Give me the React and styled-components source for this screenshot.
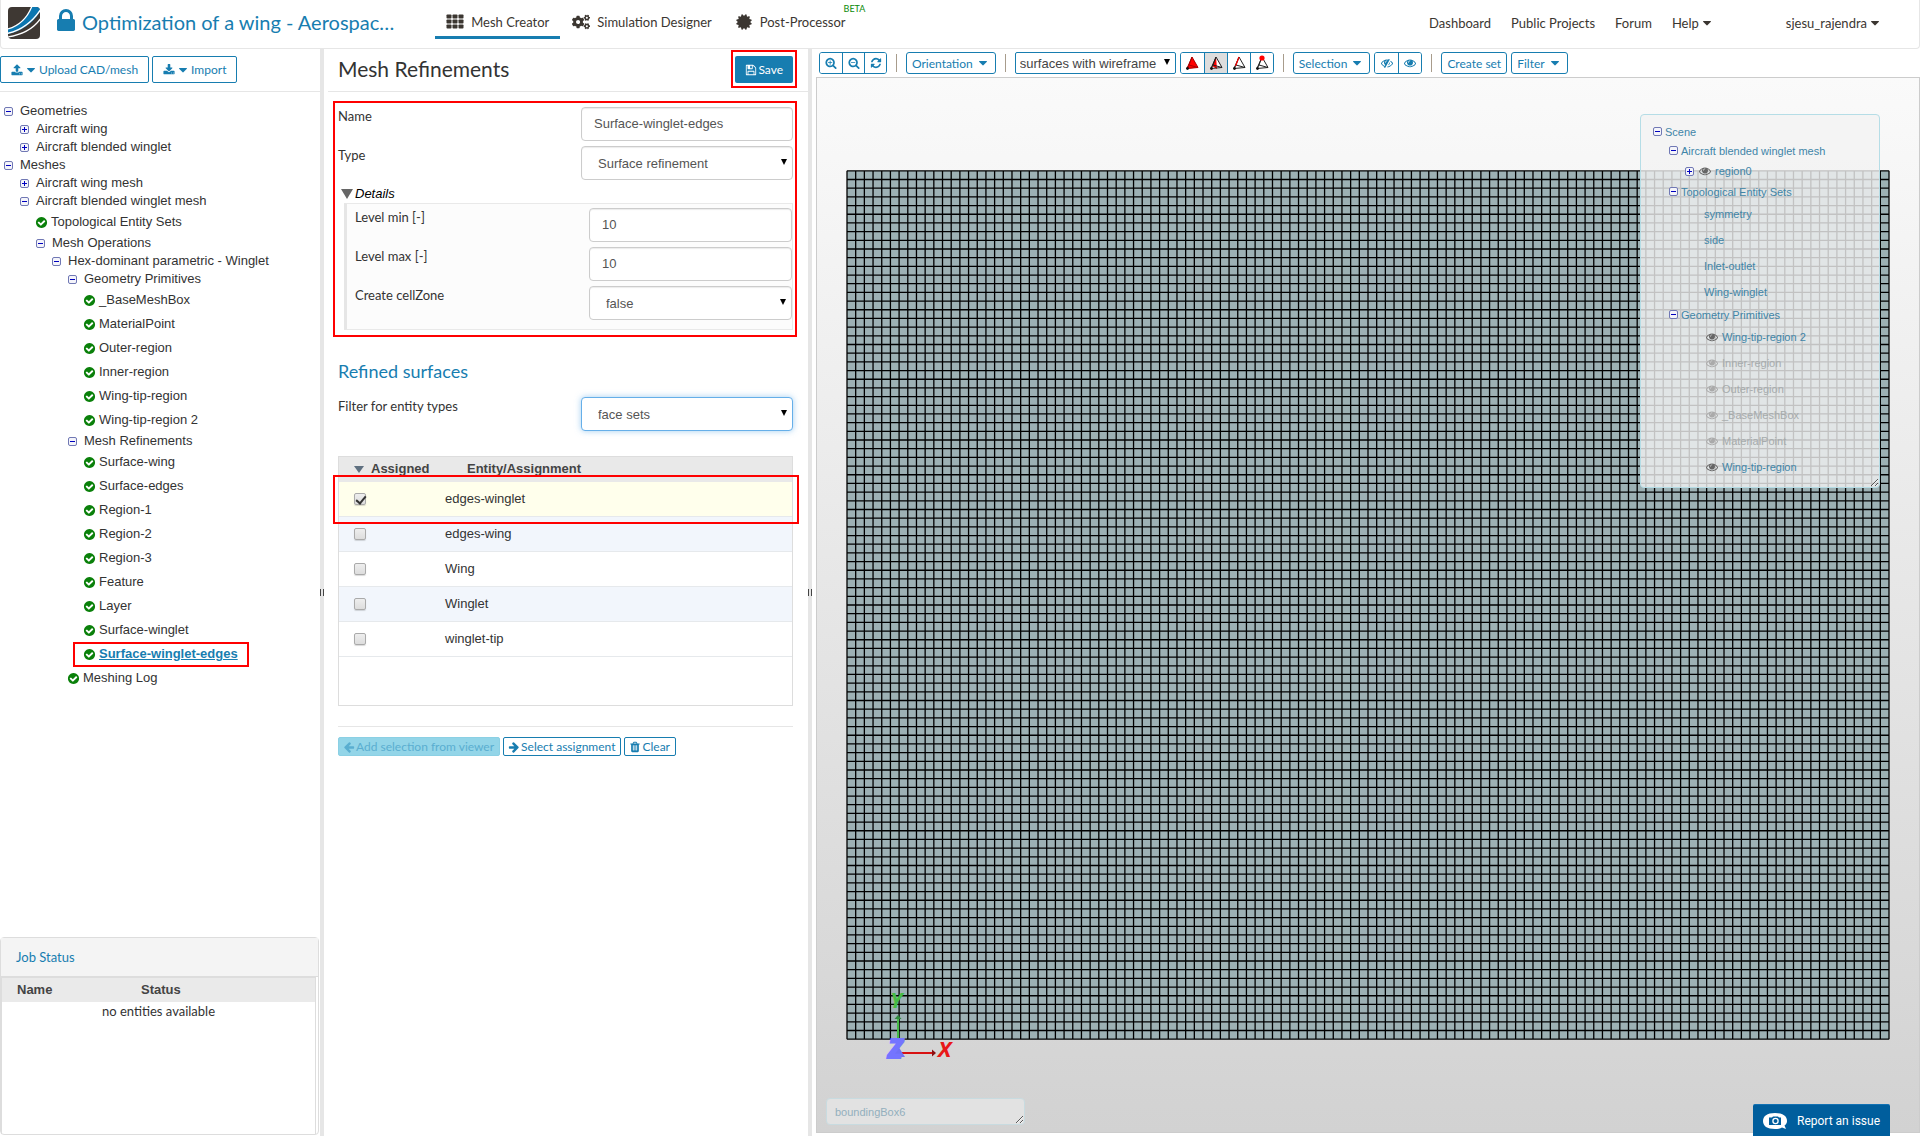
import { useState } from 'react'
import styled, { createGlobalStyle, css } from 'styled-components'
import { FaCogs } from 'react-icons/fa'

const blue = '#177db0'
const lato = 'Lato, sans-serif'
const arial = '"Liberation Sans", Arial, sans-serif'

const paths = {
    lock: 'M640 768h512v-192q0-106-75-181t-181-75-181 75-75 181v192zm832 96v576q0 40-28 68t-68 28h-960q-40 0-68-28t-28-68v-576q0-40 28-68t68-28h32v-192q0-184 132-316t316-132 316 132 132 316v192h32q40 0 68 28t28 68z',
    caret: 'M1408 704q0 26-19 45l-448 448q-19 19-45 19t-45-19l-448-448q-19-19-19-45t19-45 45-19h896q26 0 45 19t19 45z',
    check: 'M1412 734q0-28-18-46l-91-90q-19-19-45-19t-45 19l-408 407-226-226q-19-19-45-19t-45 19l-91 90q-18 18-18 46 0 27 18 45l362 362q19 19 45 19 27 0 46-19l543-543q18-18 18-45zm252 162q0 209-103 385.5t-279.5 279.5-385.5 103-385.5-103-279.5-279.5-103-385.5 103-385.5 279.5-279.5 385.5-103 385.5 103 279.5 279.5 103 385.5z',
    upload: 'M1344 1472q0-26-19-45t-45-19-45 19-19 45 19 45 45 19 45-19 19-45zm256 0q0-26-19-45t-45-19-45 19-19 45 19 45 45 19 45-19 19-45zm128-224v320q0 40-28 68t-68 28h-1472q-40 0-68-28t-28-68v-320q0-40 28-68t68-28h427q21 56 70.5 92t110.5 36h256q61 0 110.5-36t70.5-92h427q40 0 68 28t28 68zm-325-648q-17 40-59 40h-256v448q0 26-19 45t-45 19h-256q-26 0-45-19t-19-45v-448h-256q-42 0-59-40-17-39 14-69l448-448q18-19 45-19t45 19l448 448q31 30 14 69z',
    download: 'M1344 1344q0-26-19-45t-45-19-45 19-19 45 19 45 45 19 45-19 19-45zm256 0q0-26-19-45t-45-19-45 19-19 45 19 45 45 19 45-19 19-45zm128-224v320q0 40-28 68t-68 28h-1472q-40 0-68-28t-28-68v-320q0-40 28-68t68-28h465l135 136q58 56 136 56t136-56l136-136h464q40 0 68 28t28 68zm-325-569q17 41-14 70l-448 448q-18 19-45 19t-45-19l-448-448q-31-29-14-70 17-39 59-39h256v-448q0-26 19-45t45-19h256q26 0 45 19t19 45v448h256q42 0 59 39z',
    save: 'M512 1536h768v-384h-768v384zm896 0h128v-896q0-14-10-38.5t-20-34.5l-281-281q-10-10-34-20t-39-10v416q0 40-28 68t-68 28h-576q-40 0-68-28t-28-68v-416h-128v1280h128v-416q0-40 28-68t68-28h832q40 0 68 28t28 68v416zm-384-928v-320q0-13-9.5-22.5t-22.5-9.5h-192q-13 0-22.5 9.5t-9.5 22.5v320q0 13 9.5 22.5t22.5 9.5h192q13 0 22.5-9.5t9.5-22.5zm640 32v928q0 40-28 68t-68 28h-1344q-40 0-68-28t-28-68v-1344q0-40 28-68t68-28h928q40 0 88 20t76 48l280 280q28 28 48 76t20 88z',
    zoomIn: 'M1088 800v64q0 13-9.5 22.5t-22.5 9.5h-224v224q0 13-9.5 22.5t-22.5 9.5h-64q-13 0-22.5-9.5t-9.5-22.5v-224h-224q-13 0-22.5-9.5t-9.5-22.5v-64q0-13 9.5-22.5t22.5-9.5h224v-224q0-13 9.5-22.5t22.5-9.5h64q13 0 22.5 9.5t9.5 22.5v224h224q13 0 22.5 9.5t9.5 22.5zm128 32q0-185-131.5-316.5t-316.5-131.5-316.5 131.5-131.5 316.5 131.5 316.5 316.5 131.5 316.5-131.5 131.5-316.5zm512 832q0 53-37.5 90.5t-90.5 37.5q-54 0-90-38l-343-342q-179 124-399 124-143 0-273.5-55.5t-225-150-150-225-55.5-273.5 55.5-273.5 150-225 225-150 273.5-55.5 273.5 55.5 225 150 150 225 55.5 273.5q0 220-124 399l343 343q37 37 37 90z',
    zoomOut: 'M1088 800v64q0 13-9.5 22.5t-22.5 9.5h-576q-13 0-22.5-9.5t-9.5-22.5v-64q0-13 9.5-22.5t22.5-9.5h576q13 0 22.5 9.5t9.5 22.5zm128 32q0-185-131.5-316.5t-316.5-131.5-316.5 131.5-131.5 316.5 131.5 316.5 316.5 131.5 316.5-131.5 131.5-316.5zm512 832q0 53-37.5 90.5t-90.5 37.5q-54 0-90-38l-343-342q-179 124-399 124-143 0-273.5-55.5t-225-150-150-225-55.5-273.5 55.5-273.5 150-225 225-150 273.5-55.5 273.5 55.5 225 150 150 225 55.5 273.5q0 220-124 399l343 343q37 37 37 90z',
    refresh: 'M1639 1056q0 5-1 7-64 268-268 434.5t-478 166.5q-146 0-282.5-55t-243.5-157l-129 129q-19 19-45 19t-45-19-19-45v-448q0-26 19-45t45-19h448q26 0 45 19t19 45-19 45l-137 137q71 66 161 102t187 36q134 0 250-65t186-179q11-17 53-117 8-23 30-23h192q13 0 22.5 9.5t9.5 22.5zm25-800v448q0 26-19 45t-45 19h-448q-26 0-45-19t-19-45 19-45l138-138q-148-137-349-137-134 0-250 65t-186 179q-11 17-53 117-8 23-30 23h-199q-13 0-22.5-9.5t-9.5-22.5v-7q65-268 270-434.5t480-166.5q146 0 284 55.5t245 156.5l130-129q19-19 45-19t45 19 19 45z',
    eye: 'M1664 960q-152-236-381-353 61 104 61 225 0 185-131.5 316.5t-316.5 131.5-316.5-131.5-131.5-316.5q0-121 61-225-229 117-381 353 133 205 333.5 326.5t434.5 121.5 434.5-121.5 333.5-326.5zm-720-384q0-20-14-34t-34-14q-125 0-214.5 89.5t-89.5 214.5q0 20 14 34t34 14 34-14 14-34q0-86 61-147t147-61q20 0 34-14t14-34zm848 384q0 34-20 69-140 230-376.5 368.5t-499.5 138.5-499.5-139-376.5-368q-20-35-20-69t20-69q140-229 376.5-368t499.5-139 499.5 139 376.5 368q20 35 20 69z',
    eyeSlash: 'M555 1335l78-141q-87-63-136-159t-49-203q0-121 61-225-229 117-381 353 167 258 427 375zm389-759q0-20-14-34t-34-14q-125 0-214.5 89.5t-89.5 214.5q0 20 14 34t34 14 34-14 14-34q0-86 61-147t147-61q20 0 34-14t14-34zm363-191q0 7-1 9-106 189-316 567t-315 566l-49 89q-10 16-28 16-12 0-134-70-16-10-16-28 0-12 44-87-143-65-263.5-173t-208.5-245q-20-31-20-69t20-69q153-235 380-371t496-136q89 0 180 17l54-97q10-16 28-16 5 0 18 6t31 15.5 33 18.5 31.5 18.5 19.5 11.5q16 10 16 27zm37 447q0 139-79 253.5t-209 164.5l280-502q8 45 8 84zm448 128q0 35-20 69-39 64-109 145-150 172-347.5 267t-419.5 95l74-132q212-18 392.5-137t301.5-307q-115-179-282-294l63-112q95 64 182.5 153t144.5 184q20 34 20 69z',
    trash: 'M704 1376v-704q0-14-9-23t-23-9h-64q-14 0-23 9t-9 23v704q0 14 9 23t23 9h64q14 0 23-9t9-23zm256 0v-704q0-14-9-23t-23-9h-64q-14 0-23 9t-9 23v704q0 14 9 23t23 9h64q14 0 23-9t9-23zm256 0v-704q0-14-9-23t-23-9h-64q-14 0-23 9t-9 23v704q0 14 9 23t23 9h64q14 0 23-9t9-23zm-544-992h448l-48-117q-7-9-17-11h-317q-10 2-17 11zm928 32v64q0 14-9 23t-23 9h-96v948q0 83-47 143.5t-113 60.5h-832q-66 0-113-58.5t-47-141.5v-952h-96q-14 0-23-9t-9-23v-64q0-14 9-23t23-9h309l70-167q15-37 54-63t79-26h320q40 0 79 26t54 63l70 167h309q14 0 23 9t9 23z',
    arrow: 'M1664 896v128q0 53-32.5 90.5t-84.5 37.5h-704l293 294q38 36 38 90t-38 90l-75 76q-37 37-90 37-52 0-91-37l-651-652q-37-37-37-90 0-52 37-91l651-650q38-38 91-38 52 0 90 38l75 74q38 38 38 91t-38 91l-293 293h704q52 0 84.5 37.5t32.5 90.5z',
    certificate: 'M1504 896l138 135q30 28 20 70-12 41-52 51l-188 48 53 186q12 41-19 70-29 31-70 19l-186-53-48 188q-10 40-51 52-12 2-19 2-31 0-51-22l-135-138-135 138q-28 30-70 20-41-11-51-52l-48-188-186 53q-41 12-70-19-31-29-19-70l53-186-188-48q-40-10-52-51-10-42 20-70l138-135-138-135q-30-28-20-70 12-41 52-51l188-48-53-186q-12-41 19-70 29-31 70-19l186 53 48-188q10-41 51-51 41-12 70 19l135 139 135-139q29-30 70-19 41 10 51 51l48 188 186-53q41-12 70 19 31 29 19 70l-53 186 188 48q40 10 52 51 10 42-20 70z',
}

function Icon({ name, size = 14, flip }) {
    return (
        <svg width={size} height={size} viewBox="0 0 1792 1792" fill="currentColor" aria-hidden="true">
            <path d={paths[name]} transform={flip ? 'translate(1792 0) scale(-1 1)' : undefined} />
        </svg>
    )
}

function GridIcon() {
    return (
        <svg width="18" height="15" viewBox="0 0 18 15" fill="currentColor" aria-hidden="true">
            {[0, 5, 10].map((y) => [0, 6, 12].map((x) => <rect key={`${x}-${y}`} x={x + 0.5} y={y + 0.5} width="5" height="4" rx="0.8" />))}
        </svg>
    )
}

function Logo() {
    return (
        <svg width="32" height="32" viewBox="0 0 32 32" aria-hidden="true">
            <defs>
                <clipPath id="logo-clip"><rect width="32" height="32" rx="4" /></clipPath>
            </defs>
            <g clipPath="url(#logo-clip)">
                <rect width="32" height="32" fill="#3e3833" />
                <path d="M0 22Q17 17 24 -1H33V3Q22 22 0 27Z" fill="#0a76b0" />
                <path d="M0 22Q17 17 24 -1" fill="none" stroke="#fff" strokeWidth="1.3" />
                <path d="M-1 26.500Q20 22 33 2" fill="none" stroke="#fff" strokeWidth="1.500" />
                <path d="M-1 30Q22 27 33 11" fill="none" stroke="#fff" strokeWidth="1.300" />
            </g>
        </svg>
    )
}

function Toggle({ open }) {
    return (
        <svg width="9" height="9" viewBox="0 0 9 9" aria-hidden="true">
            <rect x="0.5" y="0.5" width="8" height="8" rx="1.5" fill="#f4f4fa" stroke="#7078b4" />
            <path d={open ? 'M2 4.5H7' : 'M2 4.5H7M4.500 2V7'} stroke="#0000c0" fill="none" />
        </svg>
    )
}

// mode: which part of the mesh element gets picked
function PickIcon({ mode }) {
    return (
        <svg width="14" height="16" viewBox="0 0 14 16" aria-hidden="true">
            <path d="M7 2L3 11L1 14L13 12.500Z" fill={mode === 'volume' ? '#f00' : '#fff'} />
            {mode === 'face' && <path d="M7 2L3 11L8 14Z" fill="#f00" />}
            <path d="M7 2L2 13.500L13 12.500ZM7 2L4 10L13 12.500M4 10L2 13.500" fill="none" stroke={mode === 'volume' ? '#a00' : '#222'} strokeWidth="1" />
            {mode === 'edge' && <path d="M7 2L3.500 11" stroke="#f00" strokeWidth="1.200" />}
            {mode === 'node' && <circle cx="7" cy="3" r="2.600" fill="#f00" />}
            <circle cx="2.500" cy="13.500" r="1.400" fill="#111" />
        </svg>
    )
}

function CameraBubble() {
    return (
        <svg width="24" height="18" viewBox="0 0 24 18" aria-hidden="true">
            <path d="M12 1C4 1 0 4 0 9s4 8 12 8c3 0 5-.5 7-1.500L23 17l-1.500-3.500C23.500 12 24 10.500 24 9c0-5-4-8-12-8Z" fill="#fff" />
            <path d="M6 5.500h3l1-1h5l1 1h2V13H6Z" fill="#005e9d" />
            <circle cx="12.500" cy="9" r="2.600" fill="none" stroke="#fff" strokeWidth="1.300" />
        </svg>
    )
}

const COLS = 120
const ROWS = 100
const CELL = 8.7

function MeshGrid() {
    const w = COLS * CELL
    const h = ROWS * CELL
    let d = ''
    for (let i = 0; i <= COLS; i++) d += `M${i * CELL} 0V${h}`
    for (let i = 0; i <= ROWS; i++) d += `M0 ${i * CELL}H${w}`
    return (
        <MeshSvg viewBox={`-1 -1 ${w + 2} ${h + 2}`} aria-label="Mesh">
            <rect width={w} height={h} fill="#9db1b4" />
            <path d={d} stroke="#000" strokeWidth="1.300" fill="none" />
        </MeshSvg>
    )
}

function Axes() {
    return (
        <AxesSvg width="90" height="96" viewBox="0 0 90 96" aria-label="Axes">
            <path d="M17 66V36" stroke="#45bb45" strokeWidth="2" />
            <path d="M13.500 37L17 33L20.500 37Z" fill="#2f8a3c" />
            <path d="M20 71H52" stroke="#d81212" strokeWidth="2" />
            <path d="M51 67.500L55 71L51 74.500Z" fill="#8a1010" />
            <path d="M8 75L17 64L24 75Z" fill="#7070f5" />
            <text x="9" y="26" fill="#45bb45" fontSize="22">Y</text>
            <text x="7" y="76" fill="#7474ff" stroke="#7474ff" strokeWidth="2" fontSize="27">Z</text>
            <text x="57" y="75" fill="#e81818" fontSize="22">X</text>
        </AxesSvg>
    )
}

const tree = [
    { label: 'Geometries', indent: 4, open: true },
    { label: 'Aircraft wing', indent: 20 },
    { label: 'Aircraft blended winglet', indent: 20 },
    { label: 'Meshes', indent: 4, open: true },
    { label: 'Aircraft wing mesh', indent: 20 },
    { label: 'Aircraft blended winglet mesh', indent: 20, open: true },
    { label: 'Topological Entity Sets', indent: 36, leaf: true },
    { label: 'Mesh Operations', indent: 36, open: true },
    { label: 'Hex-dominant parametric - Winglet', indent: 52, open: true },
    { label: 'Geometry Primitives', indent: 68, open: true },
    { label: '_BaseMeshBox', indent: 84, leaf: true },
    { label: 'MaterialPoint', indent: 84, leaf: true },
    { label: 'Outer-region', indent: 84, leaf: true },
    { label: 'Inner-region', indent: 84, leaf: true },
    { label: 'Wing-tip-region', indent: 84, leaf: true },
    { label: 'Wing-tip-region 2', indent: 84, leaf: true },
    { label: 'Mesh Refinements', indent: 68, open: true },
    { label: 'Surface-wing', indent: 84, leaf: true },
    { label: 'Surface-edges', indent: 84, leaf: true },
    { label: 'Region-1', indent: 84, leaf: true },
    { label: 'Region-2', indent: 84, leaf: true },
    { label: 'Region-3', indent: 84, leaf: true },
    { label: 'Feature', indent: 84, leaf: true },
    { label: 'Layer', indent: 84, leaf: true },
    { label: 'Surface-winglet', indent: 84, leaf: true },
    { label: 'Surface-winglet-edges', indent: 84, leaf: true, selected: true },
    { label: 'Meshing Log', indent: 68, leaf: true },
]

const scene = [
    { label: 'Scene', indent: 12, toggle: 'open' },
    { label: 'Aircraft blended winglet mesh', indent: 28, toggle: 'open' },
    { label: 'region0', indent: 44, toggle: 'closed', eye: true, height: 22 },
    { label: 'Topological Entity Sets', indent: 28, toggle: 'open' },
    { label: 'symmetry', indent: 63, height: 26 },
    { label: 'side', indent: 63, height: 26 },
    { label: 'Inlet-outlet', indent: 63, height: 26 },
    { label: 'Wing-winglet', indent: 63, height: 26 },
    { label: 'Geometry Primitives', indent: 28, toggle: 'open' },
    { label: 'Wing-tip-region 2', indent: 65, eye: true, height: 26 },
    { label: 'Inner-region', indent: 65, eye: true, height: 26, hidden: true },
    { label: 'Outer-region', indent: 65, eye: true, height: 26, hidden: true },
    { label: '_BaseMeshBox', indent: 65, eye: true, height: 26, hidden: true },
    { label: 'MaterialPoint', indent: 65, eye: true, height: 26, hidden: true },
    { label: 'Wing-tip-region', indent: 65, eye: true, height: 26 },
]

const entities = ['edges-winglet', 'edges-wing', 'Wing', 'Winglet', 'winglet-tip']

function SelectField({ id, value, focused, children }) {
    return (
        <SelectWrap>
            <Select id={id} defaultValue={value} $focused={focused}>{children || <option>{value}</option>}</Select>
            <SelectArrow />
        </SelectWrap>
    )
}

function Header() {
    return (
        <TopBar>
            <Logo />
            <Project href="#project">
                <Icon name="lock" size={28} />
                <span>Optimization of a wing - Aerospac…</span>
            </Project>
            <Modes>
                <Mode href="#mesh" $active><GridIcon />Mesh Creator</Mode>
                <Mode href="#simulation"><FaCogs size={18} />Simulation Designer</Mode>
                <Mode href="#post"><Icon name="certificate" size={18} />Post-Processor<Beta>BETA</Beta></Mode>
            </Modes>
            <UserNav>
                <a href="#dashboard">Dashboard</a>
                <a href="#projects">Public Projects</a>
                <a href="#forum">Forum</a>
                <a href="#help">Help<Icon name="caret" /></a>
                <UserLink href="#user">sjesu_rajendra<Icon name="caret" /></UserLink>
            </UserNav>
        </TopBar>
    )
}

function Sidebar() {
    return (
        <Side>
            <SideActions>
                <OutlineButton type="button"><Icon name="upload" size={12} /><Icon name="caret" />Upload CAD/mesh</OutlineButton>
                <OutlineButton type="button"><Icon name="download" size={12} /><Icon name="caret" />Import</OutlineButton>
            </SideActions>
            <Tree>
                {tree.map((node, i) => (
                    <TreeRow key={i} $indent={node.indent} $leaf={node.leaf}>
                        <TreeLink href="#node" $leaf={node.leaf} $selected={node.selected}>
                            {node.leaf ? <Icon name="check" size={13} /> : <Toggle open={node.open} />}
                            <span>{node.label}</span>
                        </TreeLink>
                    </TreeRow>
                ))}
            </Tree>
            <Jobs>
                <JobsTitle>Job Status</JobsTitle>
                <JobsTable>
                    <thead>
                        <tr><th>Name</th><th>Status</th></tr>
                    </thead>
                    <tbody>
                        <tr><td colSpan={2}>no entities available</td></tr>
                    </tbody>
                </JobsTable>
            </Jobs>
        </Side>
    )
}

function RefinementForm() {
    const [assigned, setAssigned] = useState(['edges-winglet'])

    function toggleAssigned(name) {
        setAssigned(assigned.includes(name) ? assigned.filter((n) => n !== name) : [...assigned, name])
    }

    return (
        <Middle>
            <FormHead>
                <h1>Mesh Refinements</h1>
                <SaveMark>
                    <SaveButton type="button"><Icon name="save" size={12} />Save</SaveButton>
                </SaveMark>
            </FormHead>
            <FormBody>
                <FieldsMark>
                    <Field>
                        <label htmlFor="name">Name</label>
                        <TextInput id="name" defaultValue="Surface-winglet-edges" />
                    </Field>
                    <Field>
                        <label htmlFor="type">Type</label>
                        <SelectField id="type" value="Surface refinement" />
                    </Field>
                    <DetailsTitle><Triangle $size={6} $color="#666" />Details</DetailsTitle>
                    <DetailsBox>
                        <Field $narrow>
                            <label htmlFor="min">Level min [-]</label>
                            <TextInput id="min" defaultValue="10" />
                        </Field>
                        <Field $narrow>
                            <label htmlFor="max">Level max [-]</label>
                            <TextInput id="max" defaultValue="10" />
                        </Field>
                        <Field $narrow>
                            <label htmlFor="zone">Create cellZone</label>
                            <SelectField id="zone" value="false"><option>false</option><option>true</option></SelectField>
                        </Field>
                    </DetailsBox>
                </FieldsMark>
                <h2>Refined surfaces</h2>
                <Field>
                    <label htmlFor="filter">Filter for entity types</label>
                    <SelectField id="filter" value="face sets" focused />
                </Field>
                <TableFrame>
                    <EntityTable>
                        <thead>
                            <tr>
                                <th><Triangle $size={5} $color="#5f7080" />Assigned</th>
                                <th>Entity/Assignment</th>
                            </tr>
                        </thead>
                        <tbody>
                            {entities.map((name) => (
                                <EntityRow key={name} $checked={assigned.includes(name)}>
                                    <td>
                                        <Checkbox
                                            type="checkbox"
                                            id={name}
                                            checked={assigned.includes(name)}
                                            onChange={() => toggleAssigned(name)}
                                        />
                                        {name === 'edges-winglet' && <RowMark />}
                                    </td>
                                    <td><label htmlFor={name}>{name}</label></td>
                                </EntityRow>
                            ))}
                        </tbody>
                    </EntityTable>
                </TableFrame>
                <FormActions>
                    <SmallButton type="button" disabled><Icon name="arrow" size={12} />Add selection from viewer</SmallButton>
                    <SmallButton type="button"><Icon name="arrow" size={12} flip />Select assignment</SmallButton>
                    <SmallButton type="button"><Icon name="trash" size={12} />Clear</SmallButton>
                </FormActions>
            </FormBody>
        </Middle>
    )
}

function Viewer() {
    return (
        <ViewerPane>
            <ViewerBar>
                <Group>
                    <button type="button" aria-label="Zoom in"><Icon name="zoomIn" size={12} /></button>
                    <button type="button" aria-label="Zoom out"><Icon name="zoomOut" size={12} /></button>
                    <button type="button" aria-label="Reset view"><Icon name="refresh" size={12} /></button>
                </Group>
                <Separator />
                <BarButton type="button">Orientation<Icon name="caret" /></BarButton>
                <Separator />
                <RenderWrap>
                    <RenderSelect aria-label="Render mode"><option>surfaces with wireframe</option></RenderSelect>
                    <SelectArrow />
                </RenderWrap>
                <Group $wide>
                    <button type="button" aria-label="Pick volumes"><PickIcon mode="volume" /></button>
                    <button type="button" aria-label="Pick faces" aria-pressed="true"><PickIcon mode="face" /></button>
                    <button type="button" aria-label="Pick edges"><PickIcon mode="edge" /></button>
                    <button type="button" aria-label="Pick nodes"><PickIcon mode="node" /></button>
                </Group>
                <Separator />
                <BarButton type="button">Selection<Icon name="caret" /></BarButton>
                <Group $wide>
                    <button type="button" aria-label="Hide"><Icon name="eyeSlash" size={12} /></button>
                    <button type="button" aria-label="Show"><Icon name="eye" size={12} /></button>
                </Group>
                <Separator />
                <BarButton type="button">Create set</BarButton>
                <BarButton type="button">Filter<Icon name="caret" /></BarButton>
            </ViewerBar>
            <Canvas>
                <MeshGrid />
                <Axes />
                <ScenePanel>
                    {scene.map((node) => (
                        <SceneRow key={node.label} $indent={node.indent} $height={node.height} $hidden={node.hidden}>
                            {node.toggle && <Toggle open={node.toggle === 'open'} />}
                            {node.eye && <EyeBox $after={node.toggle} $dim={node.hidden}><Icon name="eye" size={12} /></EyeBox>}
                            <a href="#scene">{node.label}</a>
                        </SceneRow>
                    ))}
                </ScenePanel>
                <HoverInfo>boundingBox6</HoverInfo>
            </Canvas>
        </ViewerPane>
    )
}

export default function App() {
    return (
        <Page>
            <GlobalStyle />
            <Header />
            <Workspace>
                <Sidebar />
                <Splitter />
                <RefinementForm />
                <Splitter />
                <Viewer />
            </Workspace>
            <ReportButton type="button"><CameraBubble />Report an issue</ReportButton>
        </Page>
    )
}

const GlobalStyle = createGlobalStyle`
    * {
        box-sizing: border-box;
    }
    body {
        margin: 0;
        background: #fff;
        color: #333;
        font: 13px/20px ${lato};
    }
    a {
        color: inherit;
        text-decoration: none;
    }
    button {
        font-family: ${lato};
        cursor: pointer;
    }
    svg {
        flex: none;
    }
    h1, h2 {
        margin: 0;
        font-weight: 400;
    }
`

const Page = styled.div`
    min-height: 100vh;
    display: flex;
    flex-direction: column;
`

const TopBar = styled.header`
    display: flex;
    align-items: center;
    height: 49px;
    padding: 0 37px 2px 7px;
    border: 1px solid #e6e6e6;
    border-top: none;
    border-radius: 0 0 4px 4px;
    color: #3b3631;
    font-size: 13px;
`

const Project = styled.a`
    display: flex;
    align-items: center;
    gap: 2px;
    margin-left: 12px;
    padding-bottom: 2px;
    color: ${blue};
    font-size: 20px;
    white-space: nowrap;
    svg {
        margin-top: -2px;
    }
`

const Modes = styled.nav`
    display: flex;
    margin-left: 41px;
    white-space: nowrap;
`

const Mode = styled.a`
    position: relative;
    display: flex;
    align-items: center;
    gap: 7px;
    height: 31px;
    margin-top: 1px;
    margin-right: 1px;
    padding: 0 11px 1px;
    border-bottom: 3px solid ${(p) => (p.$active ? blue : 'transparent')};
`

const Beta = styled.sup`
    position: absolute;
    left: 100%;
    top: -9px;
    margin-left: -13px;
    color: #0a8a0a;
    font-size: 9px;
    line-height: 20px;
`

const UserNav = styled.nav`
    display: flex;
    gap: 20px;
    margin-left: auto;
    white-space: nowrap;
    a {
        display: flex;
        align-items: center;
        gap: 1px;
    }
`

const UserLink = styled.a`
    margin-left: 52px;
`

const Workspace = styled.div`
    flex: 1;
    display: grid;
    grid-template-columns: 320px 4px 484px 4px 1fr;
`

const Splitter = styled.div`
    display: flex;
    align-items: center;
    justify-content: flex-end;
    background: #e6e6e6;
    &::after {
        content: '';
        width: 3px;
        height: 7px;
        border: solid #444;
        border-width: 0 1px;
    }
`

const Side = styled.aside`
    display: flex;
    flex-direction: column;
`

const SideActions = styled.div`
    display: flex;
    gap: 3px;
    padding: 7px 0 8px;
    border-bottom: 1px solid #e6e6e6;
`

const OutlineButton = styled.button`
    display: flex;
    align-items: center;
    gap: 1px;
    height: 27px;
    padding: 0 10px;
    border: 1px solid ${blue};
    border-radius: 2px;
    background: #fff;
    color: ${blue};
    font-size: 12px;
    white-space: nowrap;
`

const Tree = styled.ul`
    flex: 1;
    margin: 0;
    padding: 10px 0 0;
    list-style: none;
    font-family: ${arial};
`

const TreeRow = styled.li`
    display: flex;
    align-items: center;
    height: ${(p) => (p.$leaf ? 24 : 18)}px;
    padding-left: ${(p) => p.$indent}px;
`

const TreeLink = styled.a`
    display: flex;
    align-items: center;
    gap: ${(p) => (p.$leaf ? 3 : 7)}px;
    svg {
        color: ${(p) => (p.$leaf ? '#0a800a' : 'inherit')};
        margin-left: ${(p) => (p.$leaf ? -1 : 0)}px;
    }
    ${(p) => p.$selected && css`
        margin-left: -11px;
        padding: 0 9px;
        height: 25px;
        border: 2px solid #f00;
        color: ${blue};
        font-weight: 700;
        text-decoration: underline;
    `}
`

const Jobs = styled.section`
    height: 198px;
    margin: 0 1px 1px 0;
    display: flex;
    flex-direction: column;
    border: 1px solid #ddd;
    border-radius: 4px;
`

const JobsTitle = styled.div`
    height: 39px;
    padding: 9px 15px;
    border-bottom: 1px solid #ddd;
    background: #f4f4f4;
    color: ${blue};
`

const JobsTable = styled.table`
    flex: 1;
    display: block;
    margin-right: 2px;
    border: 1px solid #ddd;
    border-bottom: none;
    border-collapse: collapse;
    thead, tbody {
        display: block;
    }
    tr {
        display: grid;
        grid-template-columns: 124px 1fr;
    }
    th {
        height: 24px;
        padding: 0 15px;
        background: #eaeaea;
        color: #444;
        font: 700 13px/24px ${arial};
        text-align: left;
    }
    td {
        grid-column: 1 / -1;
        padding: 0;
        line-height: 18px;
        text-align: center;
    }
`

const Middle = styled.main`
    min-width: 0;
`

const FormHead = styled.div`
    display: flex;
    align-items: center;
    justify-content: space-between;
    height: 43px;
    margin-left: 4px;
    padding: 0 11px 2px 10px;
    border-bottom: 1px solid #e6e6e6;
    h1 {
        font-size: 21px;
        line-height: 24px;
    }
`

const SaveMark = styled.div`
    padding: 4px 2px 3px;
    border: 2px solid #f00;
`

const SaveButton = styled.button`
    display: flex;
    align-items: center;
    gap: 1px;
    height: 27px;
    padding: 0 10px;
    border: none;
    border-radius: 2px;
    background: ${blue};
    color: #fff;
    font-size: 12px;
`

const FormBody = styled.div`
    padding: 9px 15px 0 14px;
    h2 {
        margin: 22px 0 14px;
        color: ${blue};
        font-size: 18px;
        line-height: 24px;
    }
`

const FieldsMark = styled.div`
    display: flex;
    flex-direction: column;
    gap: 5px;
    margin: 0 -4px 0 -5px;
    padding: 4px 2px 5px 3px;
    border: 2px solid #f00;
`

const Field = styled.div`
    display: grid;
    grid-template-columns: 1fr ${(p) => (p.$narrow ? 203 : 212)}px;
    align-items: start;
    label {
        line-height: 18px;
    }
`

const controlBox = css`
    width: 100%;
    height: 34px;
    border: 1px solid #ccc;
    border-radius: 4px;
    background: #fff;
    box-shadow: inset 0 1px 1px rgba(0, 0, 0, 0.08);
    color: #555;
    font: 13px/20px ${arial};
    outline: none;
`

const TextInput = styled.input`
    ${controlBox}
    padding: 0 12px 2px;
`

const SelectWrap = styled.div`
    position: relative;
`

const Select = styled.select`
    ${controlBox}
    appearance: none;
    padding: 1px 16px 0;
    ${(p) => p.$focused && css`
        border-color: #66afe9;
        box-shadow: 0 0 6px rgba(102, 175, 233, 0.6);
    `}
`

const Triangle = styled.span`
    display: inline-block;
    border: solid transparent;
    border-width: ${(p) => p.$size + 4}px ${(p) => p.$size}px 0;
    border-top-color: ${(p) => p.$color};
`

const SelectArrow = styled.span`
    position: absolute;
    right: 6px;
    top: 50%;
    margin-top: -4px;
    border: solid transparent;
    border-width: 6px 3px 0;
    border-top-color: #000;
    pointer-events: none;
`

const DetailsTitle = styled.div`
    display: flex;
    align-items: center;
    gap: 2px;
    height: 18px;
    margin-bottom: -5px;
    padding-left: 3px;
    color: #000;
    font: italic 13px/18px ${arial};
`

const DetailsBox = styled.div`
    display: flex;
    flex-direction: column;
    gap: 5px;
    margin-left: 6px;
    padding: 4px 0 9px 8px;
    border: 1px solid #e9e9e9;
    border-left: 3px solid #e6e6e6;
    background: #fcfcfc;
`

const TableFrame = styled.div`
    height: 250px;
    margin-top: 25px;
    border: 1px solid #ddd;
`

const EntityTable = styled.table`
    width: 100%;
    border-collapse: separate;
    border-spacing: 0;
    font: 13px/20px ${arial};
    th {
        height: 25px;
        padding: 0 0 2px 15px;
        background: #e9e9e9;
        color: #444;
        text-align: left;
    }
    th:first-child {
        width: 98px;
        white-space: nowrap;
    }
    th:last-child {
        padding-left: 30px;
    }
    th > span {
        border-top-width: 7px;
        margin-right: 7px;
    }
    td {
        height: 35px;
        padding: 0 8px;
        border-bottom: 1px solid #e6e9ec;
    }
    td:first-child {
        padding-left: 15px;
    }
`

const EntityRow = styled.tr`
    position: relative;
    z-index: ${(p) => (p.$checked ? 1 : 0)};
    background: ${(p) => (p.$checked ? '#ffffec' : '#fff')};
    &:nth-child(even) {
        background: #f2f6fc;
    }
`

const RowMark = styled.span`
    position: absolute;
    inset: -7px -7px -7px -6px;
    border: 2px solid #f00;
    pointer-events: none;
`

const Checkbox = styled.input`
    appearance: none;
    display: block;
    width: 12px;
    height: 12px;
    margin: 0;
    border: 1px solid #aaa;
    border-radius: 2px;
    background: linear-gradient(#eee, #ddd);
    box-shadow: 0 1px 1px rgba(0, 0, 0, 0.15);
    &:checked::after {
        content: '';
        display: block;
        width: 4px;
        height: 8px;
        margin: 0 0 0 3px;
        border: solid #333;
        border-width: 0 2px 2px 0;
        transform: rotate(40deg);
    }
`

const FormActions = styled.div`
    display: flex;
    gap: 3px;
    margin-top: 20px;
    padding-top: 10px;
    border-top: 1px solid #e6e6e6;
`

const SmallButton = styled.button`
    display: flex;
    align-items: center;
    gap: 1px;
    height: 19px;
    padding: 0 5px 0 4px;
    border: 1px solid ${blue};
    border-radius: 2px;
    background: #fff;
    color: ${blue};
    font-size: 12px;
    white-space: nowrap;
    &:disabled {
        border-color: #8bd0e4;
        background: #93d5e8;
        color: #5aaed0;
    }
`

const ViewerPane = styled.section`
    display: flex;
    flex-direction: column;
    min-width: 0;
    padding: 0 0 3px 4px;
`

const ViewerBar = styled.div`
    display: flex;
    align-items: flex-start;
    height: 28px;
    padding: 3px 0 0 3px;
    gap: 4px;
`

const Group = styled.div`
    display: flex;
    border: 1px solid ${blue};
    border-radius: 3px;
    overflow: hidden;
    button {
        display: flex;
        align-items: center;
        justify-content: center;
        width: ${(p) => (p.$wide ? 23 : 22)}px;
        height: 20px;
        padding: 0;
        border: none;
        background: #fff;
        color: ${blue};
    }
    button + button {
        border-left: 1px solid ${blue};
    }
    button[aria-pressed='true'] {
        background: #ddd;
    }
`

const Separator = styled.span`
    width: 1px;
    height: 18px;
    margin: 2px 5px 0;
    background: #a89c8c;
`

const BarButton = styled.button`
    display: flex;
    align-items: center;
    gap: 3px;
    height: 22px;
    padding: 0 5px;
    border: 1px solid ${blue};
    border-radius: 3px;
    background: #fff;
    color: ${blue};
    font-size: 12px;
    white-space: nowrap;
`

const RenderWrap = styled.div`
    position: relative;
    width: 161px;
`

const RenderSelect = styled.select`
    appearance: none;
    width: 100%;
    height: 22px;
    padding: 1px 4px 0;
    border: 1px solid ${blue};
    border-radius: 2px;
    background: #fff;
    color: #444;
    font: 13px ${arial};
`

const Canvas = styled.div`
    position: relative;
    flex: 1;
    display: flex;
    padding: 90px 29px;
    border: 1px solid #ccc;
    background: linear-gradient(#fafafa, #d2d2d2);
`

const MeshSvg = styled.svg`
    flex: 1;
    min-width: 0;
    width: 100%;
`

const AxesSvg = styled.svg`
    position: absolute;
    left: 64px;
    bottom: 54px;
    overflow: visible;
    text {
        font-family: "Open Sans", sans-serif;
        font-style: italic;
        font-weight: 700;
    }
`

const ScenePanel = styled.div`
    position: absolute;
    top: 36px;
    right: 39px;
    width: 240px;
    height: 374px;
    padding: 7px 0 0;
    overflow: auto;
    resize: both;
    border: 1px solid #b5dde6;
    border-radius: 4px;
    background: rgba(243, 243, 243, 0.8);
    font: 11px/16px ${arial};
`

const SceneRow = styled.div`
    display: flex;
    align-items: center;
    gap: 3px;
    height: ${(p) => p.$height || 19}px;
    padding-left: ${(p) => p.$indent}px;
    color: ${(p) => (p.$hidden ? '#a6abac' : '#3f85a8')};
`

const EyeBox = styled.span`
    display: flex;
    margin-left: ${(p) => (p.$after ? 2 : 0)}px;
    margin-right: 1px;
    color: ${(p) => (p.$dim ? '#aaa' : '#666')};
`

const HoverInfo = styled.div`
    position: absolute;
    left: 9px;
    bottom: 7px;
    width: 199px;
    height: 27px;
    padding: 4px 8px;
    overflow: hidden;
    resize: both;
    border: 1px solid #c8dbe0;
    border-radius: 4px;
    background: #e2e2e2;
    color: #93afbd;
    font: 11px/18px ${arial};
`

const ReportButton = styled.button`
    position: fixed;
    right: 30px;
    bottom: 0;
    display: flex;
    align-items: center;
    gap: 10px;
    height: 32px;
    padding: 0 10px;
    border: none;
    border-top: 1px solid #1272b4;
    border-radius: 2px 2px 0 0;
    background: #005e9d;
    color: #fff;
    font: 12px Roboto, sans-serif;
`
